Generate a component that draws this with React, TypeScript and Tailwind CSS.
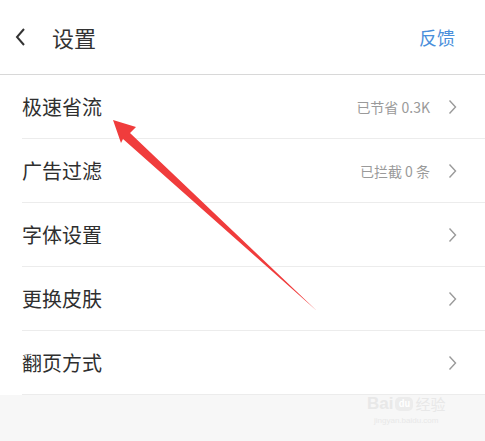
import React from "react";

const rows = [
  { label: "极速省流", value: "已节省 0.3K" },
  { label: "广告过滤", value: "已拦截 0 条" },
  { label: "字体设置", value: "" },
  { label: "更换皮肤", value: "" },
  { label: "翻页方式", value: "" },
];

const font = { fontFamily: '"Noto Sans CJK SC", "Noto Sans", sans-serif' };

function Chevron() {
  return (
    <svg width="9" height="16" viewBox="0 0 9 16" className="shrink-0">
      <path d="M1.5 1.5 L7.5 8 L1.5 14.5" fill="none" stroke="#9a9a9a" strokeWidth="1.4" />
    </svg>
  );
}

export default function App() {
  return (
    <div className="relative w-[485px] h-[441px] overflow-hidden bg-[#f7f7f7]" style={font}>
      <div className="bg-white">
        <div className="h-[75px] flex items-center border-b border-[#d8d8d8]">
          <svg width="12" height="20" viewBox="0 0 12 20" className="ml-[14px]">
            <path d="M10 2 L3 10 L10 18" fill="none" stroke="#333" strokeWidth="2" />
          </svg>
          <div className="ml-[26px] text-[22px] text-[#333] leading-none">设置</div>
          <div className="ml-auto mr-[30px] text-[18px] text-[#4a8fdb] leading-none">反馈</div>
        </div>
        {rows.map((r) => (
          <div key={r.label} className="pl-[22px]">
            <div className="h-[64px] flex items-center border-b border-[#ececec] pr-[28px]">
              <div className="text-[20px] text-[#2f2f2f] leading-none">{r.label}</div>
              <div className="ml-auto text-[14px] text-[#9a9a9a] mr-[18px] leading-none">{r.value}</div>
              <Chevron />
            </div>
          </div>
        ))}
      </div>
      <div className="absolute left-[367px] top-[395px] flex flex-col items-center">
        <div className="flex items-center gap-[2px] text-[#e8e8e8] leading-none">
          <span className="text-[17px] font-bold" style={{ fontFamily: '"Liberation Sans", sans-serif' }}>Bai</span>
          <span className="w-[18px] h-[14px] rounded-[5px] bg-[#ececec] text-white text-[9px] font-bold flex items-center justify-center">du</span>
          <span className="text-[15px]">经验</span>
        </div>
        <div className="text-[8px] text-[#e8e8e8] mt-[3px]" style={{ fontFamily: '"Liberation Sans", sans-serif' }}>jingyan.baidu.com</div>
      </div>
      <svg className="absolute left-0 top-0 pointer-events-none" width="485" height="441" viewBox="0 0 485 441">
        <polygon points="113,120 136,127 130,133 317,311 123,139 121,143" fill="#f03c3c" />
      </svg>
    </div>
  );
}
